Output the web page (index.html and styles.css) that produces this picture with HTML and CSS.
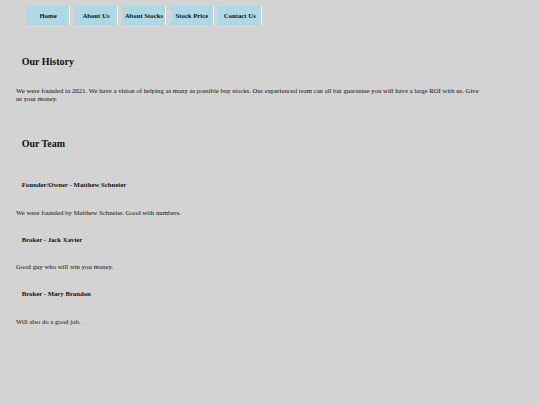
FILE: index.html
```html
<!DOCTYPE html>
<html lang="en">
<head>
<meta charset="utf-8">
<title>About Us</title>
<link rel="stylesheet" href="styles.css">
</head>
<body>
<nav class="nav">
  <a class="nav-link" href="#">Home</a>
  <a class="nav-link" href="#">About Us</a>
  <a class="nav-link" href="#">About Stocks</a>
  <a class="nav-link" href="#">Stock Price</a>
  <a class="nav-link" href="#">Contact Us</a>
</nav>
<main class="content">
  <section class="history">
    <h2 class="section-title">Our History</h2>
    <p class="text history-text">We were founded in 2021. We have a vision of helping as many as possible buy stocks. Our experienced team can all but guarantee you will have a large ROI with us. Give us your money.</p>
  </section>
  <section class="team">
    <h2 class="section-title">Our Team</h2>
    <div class="members">
      <div class="member">
        <h4 class="member-name">Founder/Owner - Matthew Schneier</h4>
        <p class="text">We were founded by Matthew Schneier. Good with numbers.</p>
      </div>
      <div class="member">
        <h4 class="member-name">Broker - Jack Xavier</h4>
        <p class="text">Good guy who will win you money.</p>
      </div>
      <div class="member">
        <h4 class="member-name">Broker - Mary Brandon</h4>
        <p class="text">Will also do a good job.</p>
      </div>
    </div>
  </section>
</main>
</body>
</html>
```
FILE: styles.css
```css
html, body {
  margin: 0;
  padding: 0;
}
body {
  background: #d3d3d3;
  color: #111;
  font-family: "Liberation Serif", "Times New Roman", serif;
  font-size: 6.74px;
  line-height: 7.67px;
  height: 405px;
}
.nav {
  display: flex;
  gap: 4.25px;
  padding: 6px 0 0 26.7px;
  height: 19px;
}
.nav-link {
  width: 42.7px;
  height: 19px;
  background: #add8e6;
  border-right: 1.3px solid #f4f8fa;
  display: flex;
  align-items: center;
  justify-content: center;
  font-weight: bold;
  color: #111;
  text-decoration: none;
  white-space: nowrap;
}
.content {
  padding-left: 16px;
}
.history {
  padding-top: 31.2px;
}
.section-title {
  margin: 0 0 0 5.7px;
  font-size: 10px;
  line-height: 11.5px;
  font-weight: bold;
}
.text {
  margin: 0;
  width: 466px;
  line-height: 7.67px;
}
.history-text {
  margin-top: 19.5px;
}
.team {
  margin-top: 35.7px;
}
.members {
  margin-top: 31.5px;
  display: flex;
  flex-direction: column;
  gap: 19.65px;
}
.member {
  display: flex;
  flex-direction: column;
  gap: 19.65px;
}
.member-name {
  margin: 0 0 0 5.7px;
  font-size: 6.74px;
  line-height: 7.67px;
  font-weight: bold;
}
```
